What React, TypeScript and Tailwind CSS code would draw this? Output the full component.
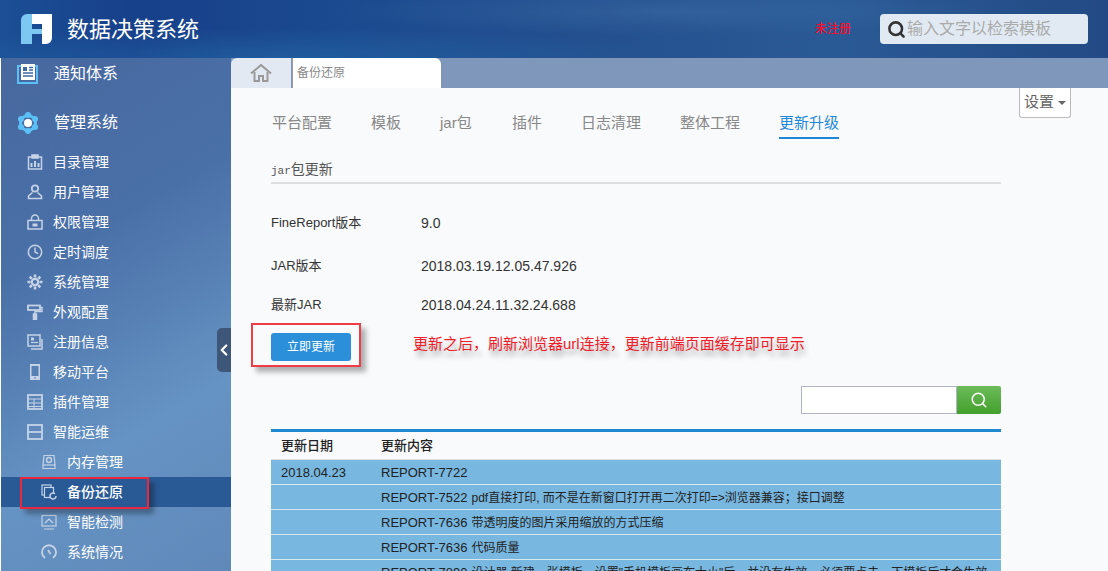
import React from 'react';
import { ChevronLeft, Clock, Search } from 'lucide-react';

const cjk = { fontFamily: '"Liberation Sans", "Noto Sans CJK SC", sans-serif' };

const iconClass = 'w-[16px] h-[16px] text-[#c6d3e6]';

const Ico: React.FC<{ children: React.ReactNode }> = ({ children }) => (
  <svg viewBox="0 0 16 16" className={iconClass} fill="none" stroke="currentColor" strokeWidth="1.5">
    {children}
  </svg>
);

const menu: { label: string; icon: React.ReactNode }[] = [
  {
    label: '目录管理',
    icon: (
      <Ico>
        <rect x="1.5" y="3" width="13" height="12" />
        <rect x="5" y="1" width="6" height="3" fill="currentColor" />
        <path d="M4.500 13V9M8 13V7M11.500 13V9" strokeWidth="2" />
      </Ico>
    ),
  },
  {
    label: '用户管理',
    icon: (
      <Ico>
        <circle cx="8" cy="4.500" r="3.200" strokeWidth="1.800" />
        <path d="M5.500 8.500 1.500 12v2.500h13V12l-4-3.500" strokeWidth="1.600" />
      </Ico>
    ),
  },
  {
    label: '权限管理',
    icon: (
      <Ico>
        <rect x="1" y="6.500" width="14" height="8.500" />
        <path d="M4.500 6.500V4.500a3.500 3.500 0 0 1 7 0v2" />
        <path d="M5.500 11h5" strokeWidth="3" />
      </Ico>
    ),
  },
  { label: '定时调度', icon: <Clock className={iconClass} strokeWidth={2.200} /> },
  {
    label: '系统管理',
    icon: (
      <Ico>
        <circle cx="8" cy="8" r="3.200" strokeWidth="2.200" />
        <path
          d="M8 .5v3M8 12.500v3M.5 8h3M12.500 8h3M2.700 2.700l2.200 2.200M11.100 11.100l2.200 2.200M13.300 2.700l-2.200 2.200M4.900 11.100l-2.200 2.200"
          strokeWidth="2.600"
        />
      </Ico>
    ),
  },
  {
    label: '外观配置',
    icon: (
      <Ico>
        <rect x="1" y="1.500" width="12" height="4.500" strokeWidth="1.800" />
        <path d="M13 3.500h2v4H8V10" />
        <rect x="6.500" y="10" width="3" height="5.500" fill="currentColor" />
      </Ico>
    ),
  },
  {
    label: '注册信息',
    icon: (
      <Ico>
        <rect x="1" y="1" width="12" height="11" />
        <path d="M15 5v10H4" />
        <path d="M4 8.500h7" strokeWidth="1.200" />
        <rect x="4" y="3.500" width="3" height="3" fill="currentColor" stroke="none" />
      </Ico>
    ),
  },
  {
    label: '移动平台',
    icon: (
      <svg viewBox="0 0 16 16" className={iconClass}>
        <path fill="currentColor" fillRule="evenodd" d="M3 0h10v16H3zM4.500 2v10h7V2zM7 13.500v1h2v-1z" />
      </svg>
    ),
  },
  {
    label: '插件管理',
    icon: (
      <Ico>
        <rect x="1" y="1" width="14" height="14" strokeWidth="1.800" />
        <path d="M1 5h14M1 9h14M1 12.500h14M7 5v10" strokeWidth="1" />
      </Ico>
    ),
  },
  {
    label: '智能运维',
    icon: (
      <Ico>
        <rect x="1" y="1" width="14" height="14" strokeWidth="1.800" />
        <path d="M1 8h14" strokeWidth="1.800" />
      </Ico>
    ),
  },
];

const subMenu: { label: string; icon: React.ReactNode; active?: boolean }[] = [
  {
    label: '内存管理',
    icon: (
      <Ico>
        <path d="M3 1.500h10l1 9v4H2v-4z" strokeWidth="1.200" />
        <circle cx="8" cy="6" r="2.500" strokeWidth="1.400" />
        <path d="M2 11h12" strokeWidth="1.200" />
      </Ico>
    ),
  },
  {
    label: '备份还原',
    active: true,
    icon: (
      <Ico>
        <rect x="1" y="1" width="9" height="10" strokeWidth="1.200" />
        <rect x="3.500" y="3.500" width="9" height="10" fill="#2a5a96" strokeWidth="1.200" />
        <path d="M15 12a3 3 0 1 1-1-2.200" fill="#2a5a96" strokeWidth="1.500" />
      </Ico>
    ),
  },
  {
    label: '智能检测',
    icon: (
      <Ico>
        <rect x="1" y="1.500" width="14" height="10.500" strokeWidth="1.200" />
        <path d="m4 9 4-4 4 4M3 15h10" strokeWidth="1.200" />
      </Ico>
    ),
  },
  {
    label: '系统情况',
    icon: (
      <Ico>
        <path d="M4 14a7 7 0 1 1 8 0" strokeWidth="1.800" />
        <path d="M7 6l2.500 4" strokeWidth="1.800" />
      </Ico>
    ),
  },
];

const tabs = ['平台配置', '模板', 'jar包', '插件', '日志清理', '整体工程', '更新升级'];

const rows = [
  { date: '2018.04.23', code: 'REPORT-7722', text: '' },
  { date: '', code: 'REPORT-7522', text: 'pdf直接打印, 而不是在新窗口打开再二次打印=>浏览器兼容；接口调整' },
  { date: '', code: 'REPORT-7636', text: '带透明度的图片采用缩放的方式压缩' },
  { date: '', code: 'REPORT-7636', text: '代码质量' },
  { date: '', code: 'REPORT-7890', text: '设计器 新建一张模板，设置"手机模板画布大小"后，并没有生效，必须要点击一下模板后才会生效' },
];

const Logo = () => (
  <svg viewBox="0 0 31 30" className="w-[31px] h-[30px] shrink-0">
    <path fill="#7cc8f2" d="M6 0h5v15h10v5H11v10H0V6a6 6 0 0 1 6-6z" />
    <path fill="#ffffff" d="M11 0h20v24a6 6 0 0 1-6 6h-4V10H11z" />
  </svg>
);

const InfoRow: React.FC<{ label: string; value: string; className: string }> = ({ label, value, className }) => (
  <div className={`flex items-center text-[#333] ${className}`}>
    <span className="w-[150px] text-[13px]">{label}</span>
    <span className="text-[14px]">{value}</span>
  </div>
);

export default function App() {
  return (
    <div className="relative w-[1108px] h-[571px] overflow-hidden bg-[#f9fafc]" style={cjk}>
      {/* 顶部 */}
      <header className="h-[58px] flex items-center pl-[21px] pr-[20px] bg-[radial-gradient(ellipse_at_25%_100%,rgba(40,115,175,0.45),transparent_35%),radial-gradient(ellipse_at_60%_20%,rgba(70,120,175,0.35),transparent_35%),linear-gradient(90deg,#1c4f95_0%,#17408a_12%,#1b4a90_30%,#24508f_55%,#2a5a96_75%,#234a84_100%)]">
        <Logo />
        <h1 className="ml-[15px] text-[22px] text-white">数据决策系统</h1>
        <span className="ml-auto mr-[29px] text-[12px] font-medium text-[#f5102e]">未注册</span>
        <div className="w-[208px] h-[30px] rounded-[4px] bg-[#e1eaf3] flex items-center pl-[7px]">
          <Search className="w-[19px] h-[19px] text-[#333]" strokeWidth={3.200} />
          <span className="ml-[1px] text-[16px] text-[#aaaaaa]">输入文字以检索模板</span>
        </div>
      </header>

      <div className="flex h-[513px]">
        {/* 左侧菜单 */}
        <aside className="w-[231px] shrink-0 border-l border-white overflow-hidden text-white bg-[linear-gradient(150deg,#47689f_0%,#4a70a8_35%,#6593c3_70%,#6089ba_100%)]">
          <div className="h-[32px] flex items-center pl-[16px]">
            <svg viewBox="0 0 22 22" className="w-[22px] h-[22px] text-[#5bc0f5]">
              <path fill="none" stroke="currentColor" strokeWidth="2" d="M4 3H1v17h19V3h-3" />
              <rect x="4" y="1" width="14" height="16" fill="#fff" />
              <path stroke="#3c6aa5" strokeWidth="1.500" d="M6 10h10M6 13h10M12 4.500h4M12 7h4" />
              <rect x="6" y="4" width="4" height="4" fill="#3c6aa5" />
            </svg>
            <span className="ml-[15px] text-[16px]">通知体系</span>
          </div>
          <div className="h-[30px] mt-[18px] flex items-center pl-[16px]">
            <svg viewBox="0 0 22 22" className="w-[22px] h-[22px]">
              <circle cx="11" cy="11" r="7.500" fill="none" stroke="#5bc0f5" strokeWidth="3" />
              <g fill="#5bc0f5">
                <circle cx="11" cy="3" r="3" />
                <circle cx="11" cy="19" r="3" />
                <circle cx="4" cy="7" r="3" />
                <circle cx="18" cy="7" r="3" />
                <circle cx="4" cy="15" r="3" />
                <circle cx="18" cy="15" r="3" />
              </g>
              <circle cx="11" cy="11" r="4" fill="#fff" />
            </svg>
            <span className="ml-[15px] text-[16px]">管理系统</span>
          </div>
          <ul className="mt-[9px] text-[14px]">
            {menu.map(m => (
              <li key={m.label} className="h-[30px] flex items-center pl-[26px]">
                {m.icon}
                <span className="ml-[10px]">{m.label}</span>
              </li>
            ))}
            {subMenu.map(m => (
              <li
                key={m.label}
                className={`h-[30px] flex items-center pl-[40px] ${m.active ? 'bg-[#2a5a96] font-medium' : ''}`}
              >
                {m.icon}
                <span className="ml-[10px]">{m.label}</span>
              </li>
            ))}
          </ul>
        </aside>

        <main className="flex-1 min-w-0">
          {/* 标签栏 */}
          <div className="h-[30px] flex bg-[#7f97ba]">
            <div className="w-[60px] flex items-center justify-center rounded-tl-[6px] bg-[#e3e9f2]">
              <svg viewBox="0 0 22 18" className="w-[22px] h-[18px]" fill="none" stroke="#999" strokeWidth="2">
                <path d="M1 9.500 11 1l10 8.500" />
                <path d="M4.500 8v9h4.500v-5h4v5h4.500V8" />
              </svg>
            </div>
            <div className="ml-[1px] pl-[1px] bg-[#999]" />
            <div className="w-[148px] pl-[4px] flex items-center rounded-tr-[6px] bg-white text-[12px] text-[#888]">
              备份还原
            </div>
          </div>

          <div className="relative w-[877px] pl-[40px] pr-[107px]">
            <button className="absolute right-[37px] top-0 w-[52px] h-[30px] bg-white border border-t-0 border-[#bbb] rounded-b-[3px] text-[15px] text-[#666] flex items-center justify-center gap-[4px]">
              设置
              <span className="w-0 h-0 border-x-[4px] border-x-transparent border-t-[4px] border-t-[#666]" />
            </button>

            <nav className="flex pt-[22px] text-[15px] text-[#888]">
              {tabs.map((t, i) => (
                <span
                  key={t}
                  className={`h-[29px] mr-[39px] leading-[25px] first:ml-[1px] ${t === 'jar包' ? 'w-[33px]' : ''} ${
                    i === tabs.length - 1 ? 'text-[#1e88d8] border-b-2 border-[#1e88d8]' : ''
                  }`}
                >
                  {t}
                </span>
              ))}
            </nav>

            <div className="mt-[15px] h-[30px] border-b-2 border-[#ddd] text-[14px] text-[#555] leading-[30px]">
              <span className="font-['Liberation_Mono'] text-[11px]">jar</span>包更新
            </div>

            <InfoRow label="FineReport版本" value="9.0" className="h-[20px] mt-[29px]" />
            <InfoRow label="JAR版本" value="2018.03.19.12.05.47.926" className="h-[20px] mt-[23px]" />
            <InfoRow label="最新JAR" value="2018.04.24.11.32.24.688" className="h-[20px] mt-[19px]" />

            <div className="mt-[18px] flex items-center h-[28px]">
              <button className="w-[80px] h-[28px] rounded-[3px] bg-[#2b90d9] text-white text-[12px]">立即更新</button>
              <span className="ml-[62px] pb-[6px] text-[15px] text-[#f01c28] [text-shadow:2px_6px_5px_rgba(0,0,0,0.3)]">
                更新之后，刷新浏览器url连接，更新前端页面缓存即可显示
              </span>
            </div>

            <div className="mt-[25px] flex justify-end">
              <input className="w-[156px] h-[28px] bg-white border border-[#b4b4c8] outline-none" />
              <button className="w-[44px] h-[28px] rounded-r-[2px] flex items-center justify-center bg-[linear-gradient(180deg,#6cbb5a,#43a02c)]">
                <Search className="w-[18px] h-[18px] text-white" strokeWidth={2} />
              </button>
            </div>

            <table className="mt-[15px] w-full table-fixed border-t-[3px] border-[#1e88d0] text-[13px] text-[#222] border-collapse">
              <thead>
                <tr className="h-[29px] border-b border-[#ddd] text-left">
                  <th className="w-[110px] pl-[10px] font-medium">更新日期</th>
                  <th className="font-medium">更新内容</th>
                </tr>
              </thead>
              <tbody className="bg-[#77b7e0]">
                {rows.map(r => (
                  <tr key={r.code + r.text} className="h-[25px] border-b border-[#d8e6ef]">
                    <td className="pl-[10px] pt-[2px]">{r.date}</td>
                    <td className="whitespace-nowrap pt-[2px]">
                      {r.code}
                      <span className="ml-[4px] text-[12px]">{r.text}</span>
                    </td>
                  </tr>
                ))}
              </tbody>
            </table>
          </div>
        </main>
      </div>

      {/* 收起按钮 */}
      <div className="absolute left-[217px] top-[328px] w-[14px] h-[44px] rounded-l-[5px] bg-[#3e5677] flex items-center justify-center text-white">
        <ChevronLeft className="w-[18px] h-[18px] shrink-0" strokeWidth={3} />
      </div>

      {/* 红色标注框 */}
      <div className="absolute left-[251px] top-[323px] w-[110px] h-[44px] border-2 border-[#f03c46] shadow-[5px_5px_5px_rgba(0,0,0,0.3)]" />
      <div className="absolute left-[20px] top-[477px] w-[129px] h-[32px] border-2 border-[#e8283c] shadow-[5px_5px_5px_rgba(0,0,0,0.3)]" />
    </div>
  );
}
